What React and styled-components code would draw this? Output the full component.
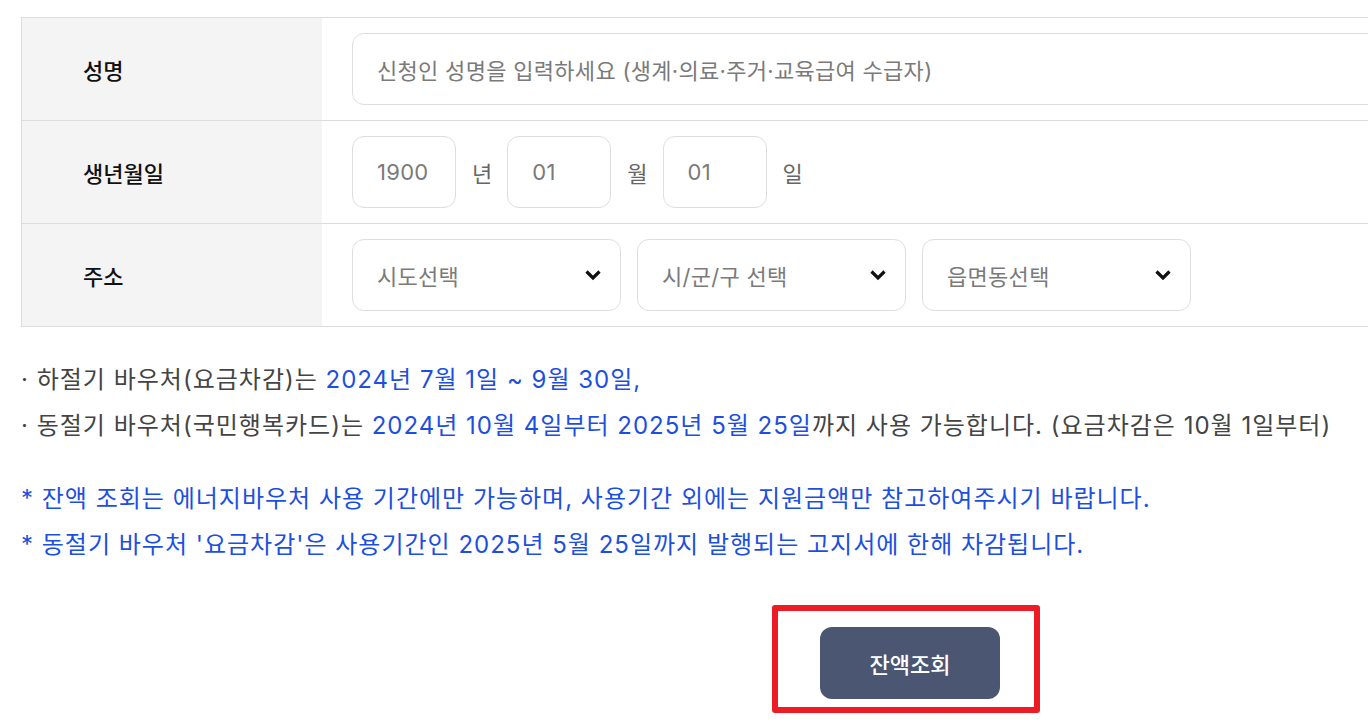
import React from "react";
import styled, { createGlobalStyle } from "styled-components";

const Global = createGlobalStyle`
  html, body { margin: 0; padding: 0; background: #fff; overflow: hidden; }
  body { font-family: Inter, "Noto Sans CJK KR", "Noto Sans", sans-serif; }
  * { box-sizing: border-box; }
`;

const Page = styled.div`
  width: 1799px;
  padding: 17px 0 0 21px;
`;

const Table = styled.div`
  border-top: 1px solid #dcdcdc;
  border-left: 1px solid #dcdcdc;
`;

const Row = styled.div`
  display: flex;
  height: 103px;
  border-bottom: 1px solid #dcdcdc;
`;

const Label = styled.div`
  width: 300px;
  flex: none;
  background: #f4f4f4;
  display: flex;
  align-items: center;
  padding-left: 61px;
  font-size: 22px;
  font-weight: 500;
  color: #111;
`;

const Cell = styled.div`
  flex: 1;
  display: flex;
  align-items: center;
  gap: 16px;
  padding-left: 30px;
`;

const Field = styled.div`
  height: 72px;
  width: ${(p) => p.$w}px;
  border: 1px solid #dedede;
  border-radius: 12px;
  display: flex;
  align-items: center;
  justify-content: space-between;
  padding: 0 18px 0 24px;
  font-size: 22px;
  letter-spacing: 0.3px;
  color: #7a7a7a;
  background: #fff;
  flex: none;
`;

const Unit = styled.span`
  font-size: 22px;
  color: #666;
  margin-right: -1px;
`;

const Chevron = () => (
  <svg width="18" height="12" viewBox="0 0 18 12">
    <path d="M2.5 2.5 L9 9 L15.5 2.5" fill="none" stroke="#111" strokeWidth="3.2" />
  </svg>
);

const Notes = styled.div`
  padding-top: 30px;
  font-size: 24px;
  line-height: 46px;
  letter-spacing: 1px;
  color: #444;
`;

const Line = styled.div`
  color: ${(p) => (p.$blue ? "#1c4fe0" : "#444")};
  margin-top: ${(p) => p.$gap || 0}px;
`;

const Blue = styled.span`
  color: #1c4fe0;
`;

const ButtonRow = styled.div`
  display: flex;
  justify-content: center;
  padding-top: 37px;
`;

const Highlight = styled.div`
  border: 6px solid #ed1c24;
  border-radius: 3px;
  padding: 16px 34px 8px 42px;
  margin-right: 8px;
`;

const SubmitButton = styled.button`
  width: 180px;
  height: 72px;
  border: none;
  border-radius: 12px;
  background: #4b5672;
  color: #fff;
  font-family: inherit;
  font-size: 22px;
  font-weight: 500;
  cursor: pointer;
`;

export default function App() {
  return (
    <>
      <Global />
      <Page>
        <Table>
          <Row>
            <Label>성명</Label>
            <Cell>
              <Field $w={1200}>신청인 성명을 입력하세요 (생계·의료·주거·교육급여 수급자)</Field>
            </Cell>
          </Row>
          <Row>
            <Label>생년월일</Label>
            <Cell>
              <Field $w={104}>1900</Field>
              <Unit>년</Unit>
              <Field $w={104}>01</Field>
              <Unit>월</Unit>
              <Field $w={104}>01</Field>
              <Unit>일</Unit>
            </Cell>
          </Row>
          <Row>
            <Label>주소</Label>
            <Cell>
              <Field $w={269}>시도선택<Chevron /></Field>
              <Field $w={269}>시/군/구 선택<Chevron /></Field>
              <Field $w={269}>읍면동선택<Chevron /></Field>
            </Cell>
          </Row>
        </Table>
        <Notes>
          <Line>· 하절기 바우처(요금차감)는 <Blue>2024년 7월 1일 ~ 9월 30일,</Blue></Line>
          <Line>· 동절기 바우처(국민행복카드)는 <Blue>2024년 10월 4일부터 2025년 5월 25일</Blue>까지 사용 가능합니다. (요금차감은 10월 1일부터)</Line>
          <Line $blue $gap={27}>* 잔액 조회는 에너지바우처 사용 기간에만 가능하며, 사용기간 외에는 지원금액만 참고하여주시기 바랍니다.</Line>
          <Line $blue>* 동절기 바우처 '요금차감'은 사용기간인 2025년 5월 25일까지 발행되는 고지서에 한해 차감됩니다.</Line>
        </Notes>
        <ButtonRow>
          <Highlight>
            <SubmitButton>잔액조회</SubmitButton>
          </Highlight>
        </ButtonRow>
      </Page>
    </>
  );
}
